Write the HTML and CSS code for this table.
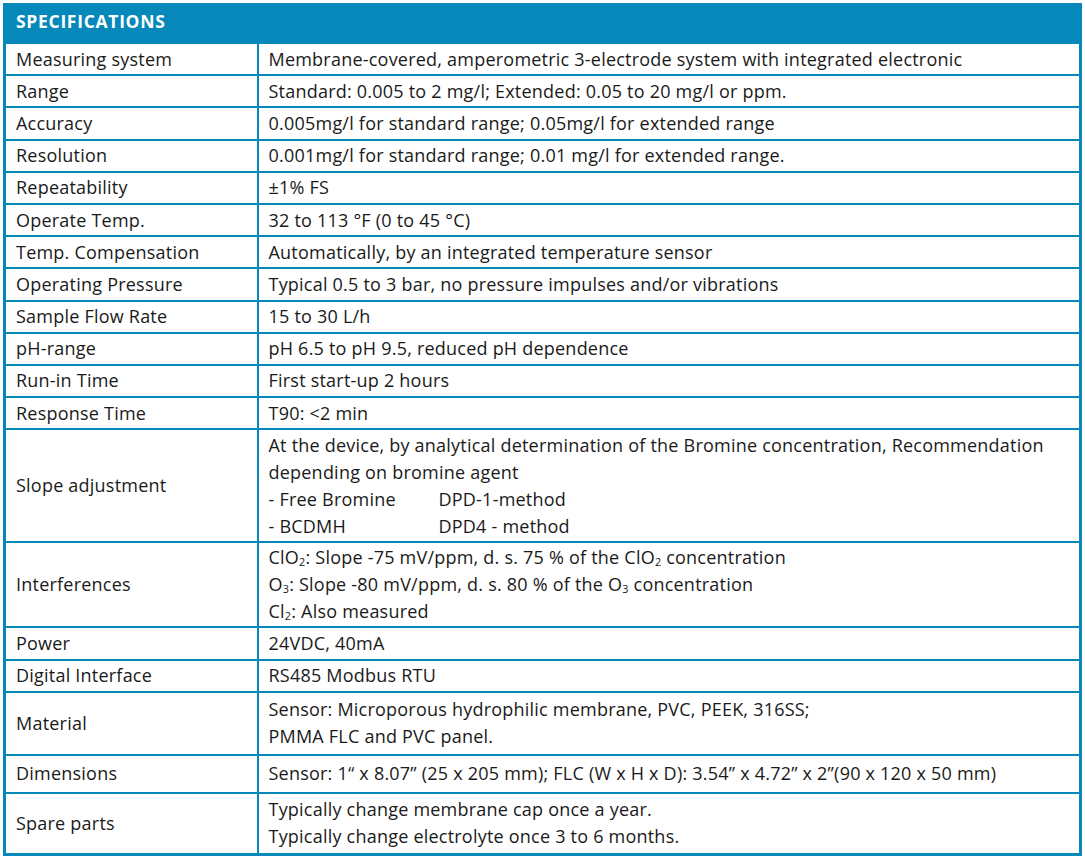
FILE: index.html
```html
<!DOCTYPE html>
<html lang="en">
<head>
<meta charset="utf-8">
<title>Specifications</title>
<link rel="stylesheet" href="styles.css">
</head>
<body>
<table class="spec">
  <colgroup><col class="c1"><col class="c2"></colgroup>
  <thead>
    <tr><th colspan="2">SPECIFICATIONS</th></tr>
  </thead>
  <tbody>
    <tr><td>Measuring system</td><td>Membrane-covered, amperometric 3-electrode system with integrated electronic</td></tr>
    <tr><td>Range</td><td>Standard: 0.005 to 2 mg/l; Extended: 0.05 to 20 mg/l or ppm.</td></tr>
    <tr><td>Accuracy</td><td>0.005mg/l for standard range; 0.05mg/l for extended range</td></tr>
    <tr><td>Resolution</td><td>0.001mg/l for standard range; 0.01 mg/l for extended range.</td></tr>
    <tr><td>Repeatability</td><td>±1% FS</td></tr>
    <tr><td>Operate Temp.</td><td>32 to 113 °F (0 to 45 °C)</td></tr>
    <tr><td>Temp. Compensation</td><td>Automatically, by an integrated temperature sensor</td></tr>
    <tr><td>Operating Pressure</td><td>Typical 0.5 to 3 bar, no pressure impulses and/or vibrations</td></tr>
    <tr><td>Sample Flow Rate</td><td>15 to 30 L/h</td></tr>
    <tr><td>pH-range</td><td>pH 6.5 to pH 9.5, reduced pH dependence</td></tr>
    <tr><td>Run-in Time</td><td>First start-up 2 hours</td></tr>
    <tr><td>Response Time</td><td>T90: &lt;2 min</td></tr>
    <tr><td>Slope adjustment</td><td>At the device, by analytical determination of the Bromine concentration, Recommendation depending on bromine agent<br><span class="item">- Free Bromine</span>DPD-1-method<br><span class="item">- BCDMH</span>DPD4 - method</td></tr>
    <tr class="tight"><td>Interferences</td><td>ClO<sub>2</sub>: Slope -75 mV/ppm, d. s. 75 % of the ClO<sub>2</sub> concentration<br>O<sub>3</sub>: Slope -80 mV/ppm, d. s. 80 % of the O<sub>3</sub> concentration<br>Cl<sub>2</sub>: Also measured</td></tr>
    <tr><td>Power</td><td>24VDC, 40mA</td></tr>
    <tr><td>Digital Interface</td><td>RS485 Modbus RTU</td></tr>
    <tr class="material"><td>Material</td><td>Sensor: Microporous hydrophilic membrane, PVC, PEEK, 316SS;<br>PMMA FLC and PVC panel.</td></tr>
    <tr class="dims"><td>Dimensions</td><td>Sensor: 1“ x 8.07” (25 x 205 mm); FLC (W x H x D): 3.54” x 4.72” x 2”(90 x 120 x 50 mm)</td></tr>
    <tr class="spare"><td>Spare parts</td><td>Typically change membrane cap once a year.<br>Typically change electrolyte once 3 to 6 months.</td></tr>
  </tbody>
</table>
</body>
</html>
```
FILE: styles.css
```css
html, body {
  margin: 0;
  padding: 0;
  background: #ffffff;
}
body {
  padding: 3px 0 0 3px;
  font-family: "Open Sans", "Liberation Sans", sans-serif;
  color: #1a1a1a;
}
.spec {
  width: 1079px;
  border-collapse: collapse;
  border: 3px solid #0688bb;
  table-layout: fixed;
}
.c1 { width: 253px; }
.spec th {
  background: #0688bb;
  color: #ffffff;
  font-size: 17.5px;
  font-weight: 700;
  letter-spacing: 0.7px;
  text-align: left;
  height: 30px;
  padding: 0 0 6px 10px;
  line-height: 30px;
}
.spec td {
  border: 2px solid #0688bb;
  font-size: 18px;
  letter-spacing: 0.22px;
  line-height: 27px;
  padding: 1.6px 10px;
  vertical-align: middle;
}
.spec tr.tight td { padding-top: 1px; padding-bottom: 1px; }
.spec tr.material td { padding-top: 3.5px; padding-bottom: 3.5px; }
.spec tr.dims td { padding-top: 4.5px; padding-bottom: 4.5px; }
.spec tr.spare td { padding-top: 2.5px; padding-bottom: 2.5px; }
.item {
  display: inline-block;
  width: 170px;
}
sub {
  font-size: 0.6em;
  line-height: 0;
  vertical-align: baseline;
  position: relative;
  top: 0.15em;
}
```
